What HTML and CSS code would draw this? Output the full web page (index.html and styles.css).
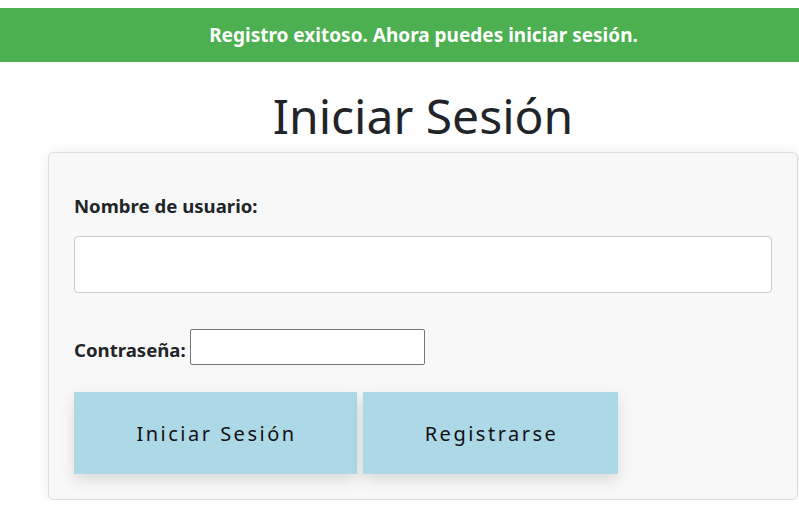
FILE: index.html
```html
<!DOCTYPE html>
<html lang="es">
<head>
<meta charset="utf-8">
<title>Iniciar Sesión</title>
<link rel="stylesheet" href="styles.css">
</head>
<body>
<div class="alert">Registro exitoso. Ahora puedes iniciar sesión.</div>
<main class="wrap">
  <h1 class="title">Iniciar Sesión</h1>
  <form class="card">
    <label class="label-block" for="user">Nombre de usuario:</label>
    <input class="input-wide" id="user" type="text">
    <div class="pass-row">
      <label class="label-inline" for="pass">Contraseña:</label>
      <input class="input-small" id="pass" type="password">
    </div>
    <div class="actions">
      <button type="button" class="btn btn-login">Iniciar Sesión</button>
      <button type="button" class="btn btn-register">Registrarse</button>
    </div>
  </form>
</main>
</body>
</html>
```
FILE: styles.css
```css
html, body {
  margin: 0;
  padding: 0;
  background: #fff;
}
body {
  padding-top: 8px;
  font-family: "Noto Sans", "Open Sans", sans-serif;
  color: #212529;
}
.alert {
  background: #4caf50;
  color: #fff;
  font-weight: 700;
  font-size: 19px;
  height: 54px;
  display: flex;
  align-items: center;
  justify-content: center;
  padding-left: 48px;
}
.wrap {
  padding-left: 48px;
  width: 750px;
}
.title {
  margin: 17px 0 0;
  text-align: center;
  font-size: 48px;
  font-weight: 400;
  line-height: 73px;
  color: #212529;
}
.card {
  box-sizing: border-box;
  width: 750px;
  height: 348px;
  background: #f8f8f8;
  border: 1px solid #ddd;
  border-radius: 6px;
  box-shadow: 0 0 12px rgba(0,0,0,0.08);
  padding: 38px 25px 0 25px;
  display: flex;
  flex-direction: column;
  align-items: flex-start;
}
.label-block {
  font-weight: 700;
  font-size: 18.6px;
  line-height: 30px;
  color: #212529;
}
.input-wide {
  box-sizing: border-box;
  margin-top: 15px;
  width: 698px;
  height: 57px;
  border: 1px solid #ccc;
  border-radius: 4px;
  background: #fff;
}
.pass-row {
  margin-top: 36px;
  display: flex;
  align-items: center;
  gap: 4px;
}
.label-inline {
  font-weight: 700;
  font-size: 18.6px;
  color: #212529;
  position: relative;
  top: 2px;
}
.input-small {
  box-sizing: border-box;
  width: 235px;
  height: 36px;
  border: 1px solid #767676;
  border-radius: 2px;
  background: #fff;
}
.actions {
  margin-top: 27px;
  display: flex;
  gap: 6px;
}
.btn {
  height: 82px;
  border: none;
  background: #add8e6;
  color: #111;
  font-family: "Noto Sans", "Open Sans", sans-serif;
  font-size: 20px;
  letter-spacing: 2.5px;
  box-shadow: 0 6px 14px rgba(0,0,0,0.12);
  padding: 0 0 0 2px;
}
.btn-login { width: 283px; }
.btn-register { width: 255px; }
```
